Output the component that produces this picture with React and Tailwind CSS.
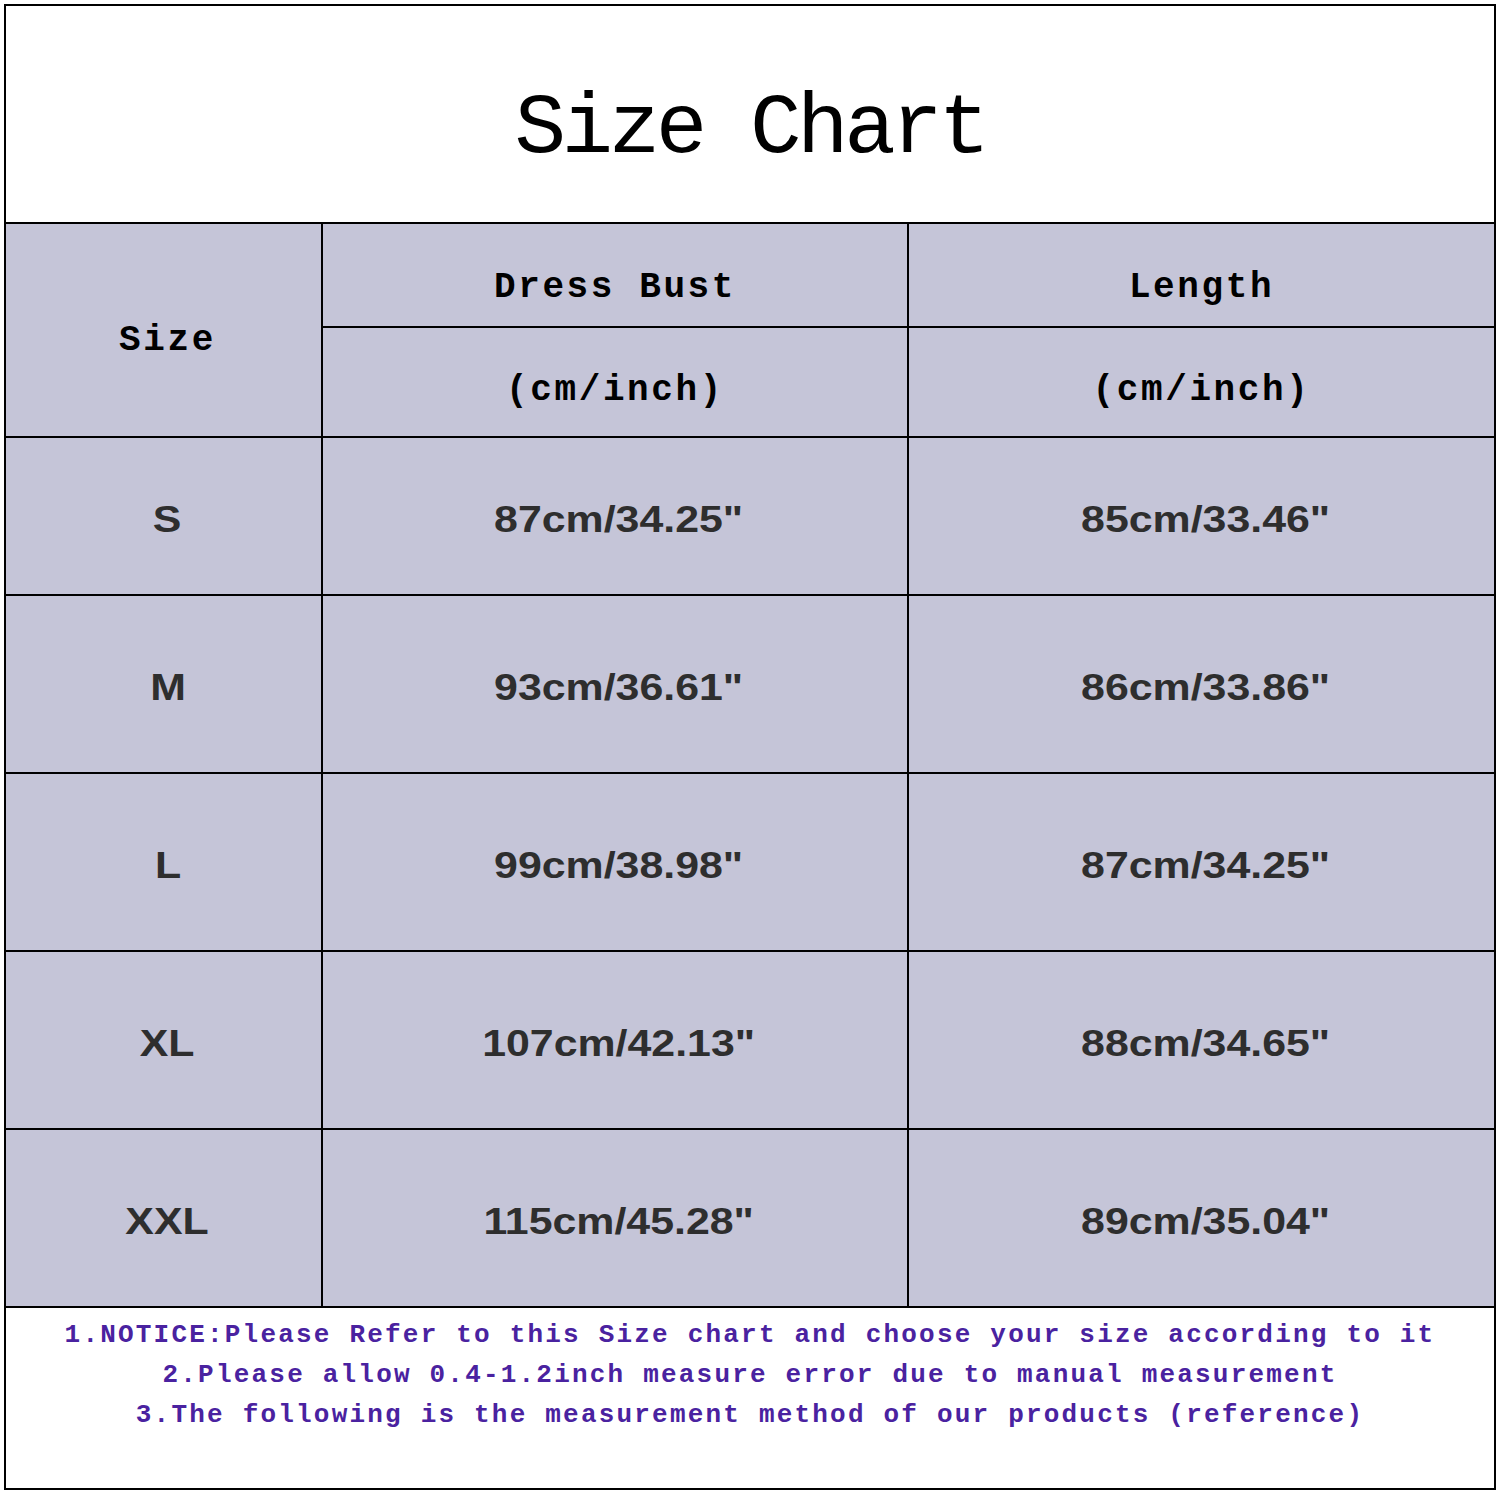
const rows = [
  { size: 'S', bust: '87cm/34.25"', length: '85cm/33.46"', h: 'h-[156px]' },
  { size: 'M', bust: '93cm/36.61"', length: '86cm/33.86"', h: 'h-[176px]' },
  { size: 'L', bust: '99cm/38.98"', length: '87cm/34.25"', h: 'h-[176px]' },
  { size: 'XL', bust: '107cm/42.13"', length: '88cm/34.65"', h: 'h-[176px]' },
  { size: 'XXL', bust: '115cm/45.28"', length: '89cm/35.04"', h: 'h-[176px]' },
]

const mono = "font-['Liberation_Mono','Courier_New',monospace]"
const cell = 'bg-[#c5c5d8] flex items-center justify-center'
const headText = `${mono} font-bold text-[36px] tracking-[2.6px] text-black`
const dataText = "inline-block scale-x-[1.19] font-['Liberation_Sans',Arial,sans-serif] font-bold text-[36px] text-[#2e2e2e]"

export default function App() {
  return (
    <div className="w-[1500px] h-[1494px] bg-white pt-[4px] pl-[4px]">
      <div className="w-[1492px] h-[1486px] border-2 border-black flex flex-col">
        <div className="h-[216px] flex items-center justify-center pt-[30px]">
          <h1 className={`${mono} text-[86px] leading-none tracking-[-4.5px] text-black`}>
            Size Chart
          </h1>
        </div>

        <div className="grid grid-cols-[315px_584px_585px] gap-[2px] bg-black border-y-2 border-black">
          <div className={`${cell} row-span-2 pt-[22px] pl-[8px]`}>
            <span className={headText}>Size</span>
          </div>
          <div className={`${cell} h-[102px] pt-[26px]`}>
            <span className={headText}>Dress Bust</span>
          </div>
          <div className={`${cell} h-[102px] pt-[26px]`}>
            <span className={headText}>Length</span>
          </div>
          <div className={`${cell} h-[108px] pt-[18px]`}>
            <span className={headText}>(cm/inch)</span>
          </div>
          <div className={`${cell} h-[108px] pt-[18px]`}>
            <span className={headText}>(cm/inch)</span>
          </div>

          {rows.map((r) => (
            <div key={r.size} className="contents">
              <div className={`${cell} ${r.h} pt-[8px] pl-[8px]`}>
                <span className={dataText}>{r.size}</span>
              </div>
              <div className={`${cell} ${r.h} pt-[8px] pl-[8px]`}>
                <span className={dataText}>{r.bust}</span>
              </div>
              <div className={`${cell} ${r.h} pt-[8px] pl-[8px]`}>
                <span className={dataText}>{r.length}</span>
              </div>
            </div>
          ))}
        </div>

        <div className={`flex-1 flex flex-col items-center pt-[7px] ${mono} font-bold text-[26px] leading-[40px] tracking-[2.2px] text-[#4a22a0]`}>
          <p>1.NOTICE:Please Refer to this Size chart and choose your size according to it</p>
          <p>2.Please allow 0.4-1.2inch measure error due to manual measurement</p>
          <p>3.The following is the measurement method of our products (reference)</p>
        </div>
      </div>
    </div>
  )
}
